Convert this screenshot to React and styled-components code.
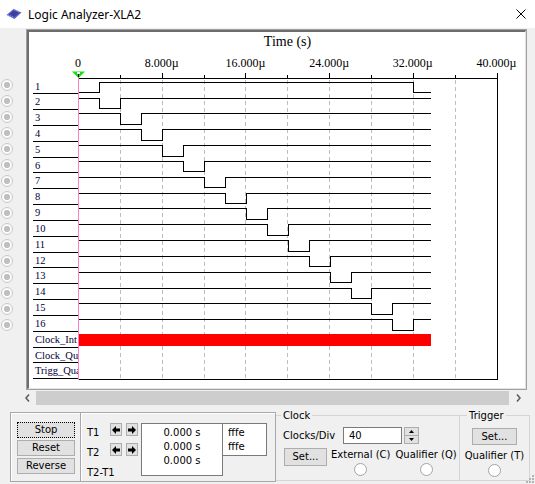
import styled, { createGlobalStyle } from "styled-components";

const GlobalStyle = createGlobalStyle`
  html, body {
    margin: 0;
    padding: 0;
    background: #f0f0f0;
  }
  body {
    font-family: "DejaVu Sans", Verdana, sans-serif;
    font-size: 10px;
    color: #000;
  }
`;

const Window = styled.div`
  position: relative;
  width: 535px;
  height: 484px;
  overflow: hidden;
  background: #f0f0f0;
  display: flex;
  flex-direction: column;
`;

const TitleBar = styled.div`
  height: 28px;
  flex-shrink: 0;
  background: #fff;
  display: flex;
  align-items: center;
  padding-left: 6px;
`;

const TitleText = styled.span`
  flex: 1;
  margin-left: 6px;
  font-family: "Noto Sans", "Open Sans", sans-serif;
  font-size: 12px;
  color: #000;
`;

const CloseButton = styled.div`
  width: 28px;
  height: 28px;
  display: flex;
  align-items: center;
  justify-content: center;
`;

const PlotRow = styled.div`
  display: flex;
  margin-top: 1px;
`;

const RadioColumn = styled.div`
  width: 26px;
  box-sizing: border-box;
  padding: 50px 0 0 1px;
  display: flex;
  flex-direction: column;
  gap: 4px;
`;

const ChannelRadio = styled.div`
  width: 12px;
  height: 12px;
  box-sizing: border-box;
  border-radius: 50%;
  border: 1.5px solid #cacaca;
  background: radial-gradient(circle at center, #c0c0c0 0 2.8px, #fbfbfb 3.4px);
`;

const Frame = styled.div`
  width: 501px;
  height: 361px;
  box-sizing: border-box;
  border: 1px solid #a0a0a0;
`;

const PlotArea = styled.div`
  height: 100%;
  box-sizing: border-box;
  border-style: solid;
  border-width: 2px 1px 1px 2px;
  border-color: #6d6d6d #e3e3e3 #e3e3e3 #6d6d6d;
  background: #fff;
  display: flex;
`;

const LabelColumn = styled.div`
  width: 45px;
  margin-left: 4px;
  padding-top: 46.5px;
  flex-shrink: 0;
  overflow: hidden;
`;

const ChannelLabel = styled.div`
  height: 15.833px;
  box-sizing: border-box;
  border-bottom: 1px solid #000;
  padding: 1px 0 0 2px;
  font-family: "Liberation Serif", "Times New Roman", serif;
  font-size: 10.5px;
  line-height: 14px;
  white-space: nowrap;
  color: #000038;
`;

const Scrollbar = styled.div`
  display: flex;
  width: 508px;
  height: 14px;
  margin: 1px 0 0 19px;
`;

const ScrollArrow = styled.div`
  width: ${(p) => p.$w}px;
  display: flex;
  align-items: center;
  justify-content: center;
`;

const ScrollThumb = styled.div`
  flex: 1;
  background: #cdcdcd;
`;

const BottomArea = styled.div`
  display: flex;
  align-items: flex-start;
  padding-left: 10px;
`;

const ControlBox = styled.div`
  margin-top: 7px;
  width: 266px;
  height: 70px;
  box-sizing: border-box;
  border: 1px solid #a8a8a8;
  box-shadow: inset 1px 1px 0 #fff;
  display: flex;
`;

const ButtonCell = styled.div`
  width: 70px;
  box-sizing: border-box;
  border-right: 1px solid #a8a8a8;
  box-shadow: 1px 0 0 #fff;
  padding: 9px 0 0 6px;
  display: flex;
  flex-direction: column;
  gap: 2px;
`;

const PanelButton = styled.div`
  width: ${(p) => p.$w || 58}px;
  height: ${(p) => p.$h || 16}px;
  box-sizing: border-box;
  background: #e1e1e1;
  border: 1px ${(p) => (p.$focused ? "dotted #000" : "solid #adadad")};
  display: flex;
  align-items: center;
  justify-content: center;
  font-size: 10px;
  line-height: 1;
`;

const CursorCell = styled.div`
  flex: 1;
  display: flex;
  align-items: flex-start;
  padding: 10px 0 0 6px;
`;

const CursorGrid = styled.div`
  display: grid;
  grid-template-columns: 19px 12px 12px;
  grid-template-rows: 13px 13px 13px;
  column-gap: 4px;
  row-gap: 7px;
  margin-right: 3px;
`;

const CursorLabel = styled.span`
  grid-column: ${(p) => (p.$wide ? "1 / 4" : "1")};
  padding-top: 4px;
  font-size: 10px;
  line-height: 11px;
  white-space: nowrap;
`;

const ArrowButton = styled.div`
  width: 12px;
  height: 13px;
  box-sizing: border-box;
  background: #e1e1e1;
  border: 1px solid #adadad;
  display: flex;
  align-items: center;
  justify-content: center;
`;

const ReadoutBox = styled.div`
  width: ${(p) => p.$w}px;
  height: ${(p) => p.$h}px;
  box-sizing: border-box;
  background: #fff;
  border: 1px solid #7a7a7a;
  margin-left: ${(p) => p.$ml || 0}px;
  padding: 2px 0 0 ${(p) => p.$pl || 0}px;
  text-align: ${(p) => (p.$center ? "center" : "left")};
  font-size: 10px;
  line-height: 14px;
`;

const Group = styled.fieldset`
  margin: 4px 0 0 0;
  padding: 0;
  width: ${(p) => p.$w}px;
  height: 72px;
  box-sizing: border-box;
  border: 1px solid #d5d5d5;
  border-left: none;
  min-inline-size: 0;
`;

const GroupTitle = styled.legend`
  margin-left: ${(p) => p.$ml}px;
  padding: 0 2px;
  font-size: 10px;
  line-height: 13px;
`;

const ClockBody = styled.div`
  padding: 5px 0 0 7px;
`;

const ClockRow = styled.div`
  display: flex;
  align-items: ${(p) => p.$align || "center"};
  margin-top: ${(p) => p.$mt || 0}px;
`;

const FieldLabel = styled.span`
  width: ${(p) => p.$w}px;
  font-size: 10px;
  white-space: nowrap;
`;

const NumberInput = styled.div`
  width: 59px;
  height: 17px;
  box-sizing: border-box;
  background: #fff;
  border: 1px solid #7a7a7a;
  padding-left: 5px;
  display: flex;
  align-items: center;
  font-size: 10px;
`;

const Spin = styled.div`
  margin-left: 2px;
  width: 15px;
  height: 17px;
  display: flex;
  flex-direction: column;
`;

const SpinHalf = styled.div`
  flex: 1;
  box-sizing: border-box;
  background: #e1e1e1;
  border: 1px solid #adadad;
  border-top-width: ${(p) => (p.$lower ? 0 : 1)}px;
  display: flex;
  align-items: center;
  justify-content: center;
`;

const OptionColumn = styled.div`
  margin-left: ${(p) => p.$ml || 0}px;
  display: flex;
  flex-direction: column;
  align-items: center;
`;

const OptionLabel = styled.span`
  padding-top: 1px;
  margin-top: ${(p) => p.$mt || 0}px;
  font-size: 10px;
  line-height: 12px;
  white-space: nowrap;
`;

const RadioCircle = styled.div`
  margin-top: 2px;
  width: 13px;
  height: 13px;
  box-sizing: border-box;
  border-radius: 50%;
  border: 1px solid #a4a4a4;
  background: #fff;
`;

const TriggerBody = styled.div`
  padding-top: 6px;
  display: flex;
  flex-direction: column;
  align-items: center;
`;

const Grip = styled.svg`
  position: absolute;
  right: 1px;
  bottom: 1px;
`;

/* chart geometry, in page pixels */
const ROW_H = 15.833;
const ROW_TOP = 78.5;
const X0 = 78;
const DIV = 41.85;
const STEP = DIV / 2;
const WAVE_END = 431;
const px = (v) => Math.round(v) + 0.5;

const channels = [
  "1", "2", "3", "4", "5", "6", "7", "8", "9", "10", "11", "12", "13", "14", "15", "16",
  "Clock_Int", "Clock_Qua", "Trigg_Qua",
];

const tickLabels = ["0", "8.000µ", "16.000µ", "24.000µ", "32.000µ", "40.000µ"];

function wavePath(n) {
  const top = ROW_TOP + ROW_H * (n - 1);
  const hi = px(top + 3.3);
  const lo = px(top + 13.8);
  const level = (k) => (k % 16 === n - 1 ? lo : hi);
  let d = `M${X0} ${level(0)}`;
  for (let k = 1; k <= 16; k++) {
    if (level(k) !== level(k - 1)) {
      const x = px(X0 + k * STEP + 0.5);
      d += ` H${x} V${level(k)}`;
    }
  }
  return d + ` H${WAVE_END}`;
}

function WaveChart() {
  const bottom = px(ROW_TOP + ROW_H * 19 - 0.5);
  const right = px(X0 + DIV * 10);
  const clockTop = ROW_TOP + ROW_H * 16;
  return (
    <svg width="446" height="356" viewBox="78 32 446 356" style={{ overflow: "visible", flexShrink: 0 }}>
      <text x="287.5" y="46" textAnchor="middle" fontFamily="'Liberation Serif', serif" fontSize="14">
        Time (s)
      </text>
      {tickLabels.map((t, i) => (
        <text key={t} x={X0 + DIV * 2 * i} y="66.5" textAnchor="middle" fontFamily="'Liberation Serif', serif" fontSize="12">
          {t}
        </text>
      ))}
      <g shapeRendering="crispEdges" stroke="#000" fill="none">
        <path d={`M${X0} 78.5 H${right} V${bottom} H${X0}`} />
        {Array.from({ length: 10 }, (_, i) => i + 1).map((m) => (
          <line key={m} x1={px(X0 + DIV * m)} x2={px(X0 + DIV * m)} y1={m % 2 ? 75 : 73} y2="78.5" />
        ))}
      </g>
      <g shapeRendering="crispEdges" stroke="#bdbdbd" strokeDasharray="4 3">
        {Array.from({ length: 9 }, (_, i) => i + 1).map((m) => (
          <line key={m} x1={px(X0 + DIV * m)} x2={px(X0 + DIV * m)} y1="80" y2={bottom - 1} />
        ))}
      </g>
      <g shapeRendering="crispEdges" stroke="#000" fill="none">
        {Array.from({ length: 16 }, (_, i) => (
          <path key={i} d={wavePath(i + 1)} />
        ))}
      </g>
      <rect x={X0} y={Math.round(clockTop + 2.3)} width={WAVE_END - X0} height="12" fill="#ff0000" shapeRendering="crispEdges" />
      <line x1="78.5" x2="78.5" y1="77" y2={bottom} stroke="#ff7fc4" shapeRendering="crispEdges" />
      <polygon points="72,71.5 85,71.5 78.5,78" fill="#14e014" />
      <rect x="77" y="72" width="3" height="2" fill="#fff" />
      <rect x="78" y="74" width="1" height="3" fill="#000" />
    </svg>
  );
}

function ChipIcon() {
  return (
    <svg width="16" height="12" viewBox="0 0 16 12">
      <polygon points="0.5,7 7.5,1 15.5,4.5 8.5,11" fill="#5a5fc8" />
      <polygon points="3,6.6 7.7,2.6 13,4.9 8.3,9" fill="#3c3f9e" />
      <g stroke="#b8c0ff" strokeWidth="0.8">
        <line x1="1.5" y1="8" x2="3" y2="6.7" />
        <line x1="3.3" y1="9" x2="4.8" y2="7.7" />
        <line x1="5.2" y1="10" x2="6.7" y2="8.7" />
        <line x1="9" y1="1.5" x2="10.5" y2="2.4" />
        <line x1="11" y1="2.4" x2="12.5" y2="3.3" />
      </g>
    </svg>
  );
}

const CloseIcon = () => (
  <svg width="10" height="10" viewBox="0 0 10 10">
    <path d="M0.5 0.5 L9.5 9.5 M9.5 0.5 L0.5 9.5" stroke="#000" strokeWidth="1" />
  </svg>
);

const Chevron = ({ dir }) => (
  <svg width="5" height="8" viewBox="0 0 5 8">
    <polyline
      points={dir === "left" ? "4,0.5 1,4 4,7.5" : "1,0.5 4,4 1,7.5"}
      fill="none"
      stroke="#606060"
      strokeWidth="1.6"
    />
  </svg>
);

const BlockArrow = ({ dir }) => (
  <svg width="8" height="8" viewBox="0 0 8 8">
    <polygon
      points={dir === "left" ? "0,4 4,0 4,2.5 8,2.5 8,5.5 4,5.5 4,8" : "8,4 4,0 4,2.5 0,2.5 0,5.5 4,5.5 4,8"}
      fill="#000"
    />
  </svg>
);

const SpinTriangle = ({ up }) => (
  <svg width="5" height="3" viewBox="0 0 5 3">
    <polygon points={up ? "0,3 5,3 2.5,0" : "0,0 5,0 2.5,3"} fill="#000" />
  </svg>
);

export default function App() {
  return (
    <Window>
      <GlobalStyle />
      <TitleBar>
        <ChipIcon />
        <TitleText>Logic Analyzer-XLA2</TitleText>
        <CloseButton>
          <CloseIcon />
        </CloseButton>
      </TitleBar>

      <PlotRow>
        <RadioColumn>
          {Array.from({ length: 16 }, (_, i) => (
            <ChannelRadio key={i} />
          ))}
        </RadioColumn>
        <Frame>
          <PlotArea>
            <LabelColumn>
              {channels.map((c) => (
                <ChannelLabel key={c}>{c}</ChannelLabel>
              ))}
            </LabelColumn>
            <WaveChart />
          </PlotArea>
        </Frame>
      </PlotRow>

      <Scrollbar>
        <ScrollArrow $w={17}>
          <Chevron dir="left" />
        </ScrollArrow>
        <ScrollThumb />
        <ScrollArrow $w={18}>
          <Chevron dir="right" />
        </ScrollArrow>
      </Scrollbar>

      <BottomArea>
        <ControlBox>
          <ButtonCell>
            <PanelButton $focused>Stop</PanelButton>
            <PanelButton>Reset</PanelButton>
            <PanelButton>Reverse</PanelButton>
          </ButtonCell>
          <CursorCell>
            <CursorGrid>
              <CursorLabel>T1</CursorLabel>
              <ArrowButton>
                <BlockArrow dir="left" />
              </ArrowButton>
              <ArrowButton>
                <BlockArrow dir="right" />
              </ArrowButton>
              <CursorLabel>T2</CursorLabel>
              <ArrowButton>
                <BlockArrow dir="left" />
              </ArrowButton>
              <ArrowButton>
                <BlockArrow dir="right" />
              </ArrowButton>
              <CursorLabel $wide>T2-T1</CursorLabel>
            </CursorGrid>
            <ReadoutBox $w={82} $h={53} $center>
              <div>0.000 s</div>
              <div>0.000 s</div>
              <div>0.000 s</div>
            </ReadoutBox>
            <ReadoutBox $w={45} $h={33} $ml={-1} $pl={5}>
              <div>fffe</div>
              <div>fffe</div>
            </ReadoutBox>
          </CursorCell>
        </ControlBox>

        <Group $w={184}>
          <GroupTitle $ml={5}>Clock</GroupTitle>
          <ClockBody>
            <ClockRow>
              <FieldLabel $w={60}>Clocks/Div</FieldLabel>
              <NumberInput>40</NumberInput>
              <Spin>
                <SpinHalf>
                  <SpinTriangle up />
                </SpinHalf>
                <SpinHalf $lower>
                  <SpinTriangle />
                </SpinHalf>
              </Spin>
            </ClockRow>
            <ClockRow $align="flex-start" $mt={4}>
              <PanelButton $w={43} $h={18} style={{ marginLeft: 1 }}>
                Set...
              </PanelButton>
              <OptionColumn $ml={4}>
                <OptionLabel>External (C)</OptionLabel>
                <RadioCircle />
              </OptionColumn>
              <OptionColumn $ml={5}>
                <OptionLabel>Qualifier (Q)</OptionLabel>
                <RadioCircle />
              </OptionColumn>
            </ClockRow>
          </ClockBody>
        </Group>

        <Group $w={70}>
          <GroupTitle $ml={7}>Trigger</GroupTitle>
          <TriggerBody>
            <PanelButton $w={45} $h={17}>
              Set...
            </PanelButton>
            <OptionLabel $mt={4}>Qualifier (T)</OptionLabel>
            <RadioCircle />
          </TriggerBody>
        </Group>
      </BottomArea>

      <Grip width="8" height="8" viewBox="0 0 8 8">
        {[
          [6, 0], [6, 3], [3, 3], [6, 6], [3, 6], [0, 6],
        ].map(([x, y]) => (
          <rect key={`${x}-${y}`} x={x} y={y} width="2" height="2" fill="#b4b4b4" />
        ))}
      </Grip>
    </Window>
  );
}
